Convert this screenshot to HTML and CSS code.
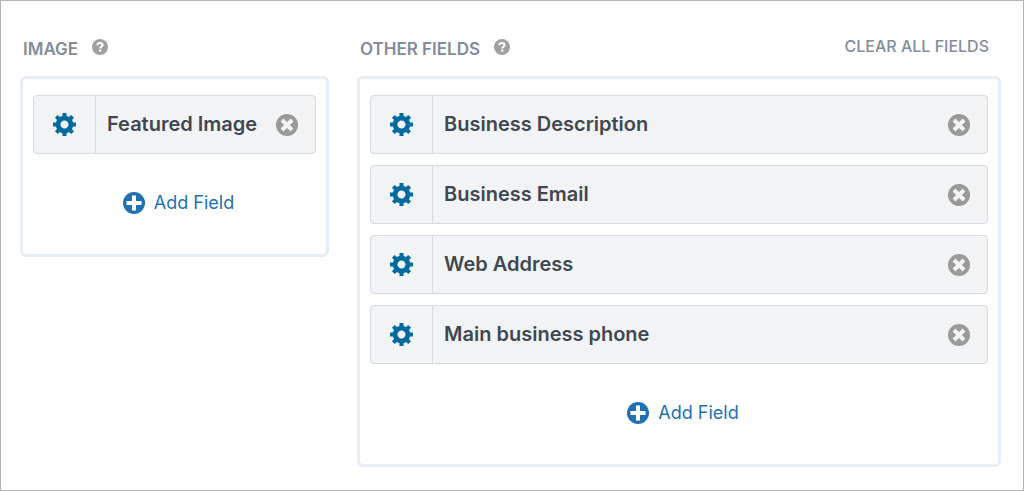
FILE: index.html
```html
<!DOCTYPE html>
<html lang="en">
<head>
<meta charset="utf-8">
<title>Fields</title>
<link rel="stylesheet" href="styles.css">
</head>
<body>
<svg hidden>
  <symbol id="gear" viewBox="1 2 17 17"><path d="M18 12h-2.18c-.17.7-.44 1.35-.81 1.93l1.54 1.54-2.1 2.1-1.54-1.54c-.58.36-1.23.63-1.91.79V19H8v-2.18c-.68-.16-1.33-.43-1.91-.79l-1.54 1.54-2.12-2.12 1.54-1.54c-.36-.58-.63-1.23-.79-1.91H1V9.03h2.17c.16-.7.44-1.35.8-1.94L2.43 5.55l2.1-2.1 1.54 1.54c.58-.37 1.24-.64 1.93-.81V2h3v2.18c.68.16 1.33.43 1.91.79l1.54-1.54 2.12 2.12-1.54 1.54c.36.59.64 1.24.8 1.94H18V12zm-8.5 1.5c1.66 0 3-1.34 3-3s-1.34-3-3-3-3 1.34-3 3 1.34 3 3 3z"/></symbol>
  <symbol id="remove" viewBox="0 0 22 22"><circle cx="11" cy="11" r="11"/><path d="M6 6l10 10M16 6L6 16" stroke="#f2f3f5" stroke-width="4"/></symbol>
  <symbol id="plus" viewBox="0 0 22 22"><circle cx="11" cy="11" r="11"/><path d="M11 3.5v15M3.5 11h15" stroke="#fff" stroke-width="4"/></symbol>
  <symbol id="help" viewBox="0 0 16 16"><circle cx="8" cy="8" r="8"/><path d="M5.4 6.3C5.4 4.7 6.5 3.9 8 3.9s2.6.8 2.6 2.1c0 1.6-2.3 1.6-2.3 3.4" fill="none" stroke="#fff" stroke-width="2"/><path d="M7.1 10.5h2.3v2.1H7.1z" fill="#fff"/></symbol>
</svg>
<main class="layout">
  <section class="group">
    <header class="group-header">
      <h2 class="group-title">IMAGE</h2>
      <button class="icon-button help" aria-label="Help: image"><svg class="help-icon"><use href="#help"/></svg></button>
    </header>
    <div class="panel">
      <ul class="fields">
        <li class="field">
          <button class="icon-button settings" aria-label="Settings"><svg class="gear-icon"><use href="#gear"/></svg></button>
          <span class="field-name">Featured Image</span>
          <button class="icon-button remove" aria-label="Remove"><svg class="round-icon"><use href="#remove"/></svg></button>
        </li>
      </ul>
      <button class="add-field"><svg class="round-icon"><use href="#plus"/></svg>Add Field</button>
    </div>
  </section>
  <section class="group">
    <header class="group-header">
      <h2 class="group-title">OTHER FIELDS</h2>
      <button class="icon-button help" aria-label="Help: other fields"><svg class="help-icon"><use href="#help"/></svg></button>
      <button class="clear-all">CLEAR ALL FIELDS</button>
    </header>
    <div class="panel">
      <ul class="fields">
        <li class="field">
          <button class="icon-button settings" aria-label="Settings"><svg class="gear-icon"><use href="#gear"/></svg></button>
          <span class="field-name">Business Description</span>
          <button class="icon-button remove" aria-label="Remove"><svg class="round-icon"><use href="#remove"/></svg></button>
        </li>
        <li class="field">
          <button class="icon-button settings" aria-label="Settings"><svg class="gear-icon"><use href="#gear"/></svg></button>
          <span class="field-name">Business Email</span>
          <button class="icon-button remove" aria-label="Remove"><svg class="round-icon"><use href="#remove"/></svg></button>
        </li>
        <li class="field">
          <button class="icon-button settings" aria-label="Settings"><svg class="gear-icon"><use href="#gear"/></svg></button>
          <span class="field-name">Web Address</span>
          <button class="icon-button remove" aria-label="Remove"><svg class="round-icon"><use href="#remove"/></svg></button>
        </li>
        <li class="field">
          <button class="icon-button settings" aria-label="Settings"><svg class="gear-icon"><use href="#gear"/></svg></button>
          <span class="field-name">Main business phone</span>
          <button class="icon-button remove" aria-label="Remove"><svg class="round-icon"><use href="#remove"/></svg></button>
        </li>
      </ul>
      <button class="add-field"><svg class="round-icon"><use href="#plus"/></svg>Add Field</button>
    </div>
  </section>
</main>
</body>
</html>
```

FILE: styles.css
```css
* {
  box-sizing: border-box;
}

body {
  margin: 0;
  min-height: 100vh;
  border: 1px solid #b5b5b5;
  background: #fff;
  font-family: Inter, "Liberation Sans", sans-serif;
}

button {
  padding: 0;
  border: 0;
  background: none;
  font: inherit;
  cursor: pointer;
}

svg {
  display: block;
  fill: currentColor;
}

svg[hidden] {
  display: none;
}

.layout {
  display: grid;
  grid-template-columns: 309fr 644fr;
  align-items: start;
  gap: 28px;
  padding: 32px 22px 20px 19px;
}

.group-header {
  display: flex;
  align-items: center;
  height: 32px;
  margin-bottom: 11px;
  padding: 0 12px 0 3px;
  color: #828d99;
}

.group-title {
  margin: 0;
  font-size: 17px;
  font-weight: 600;
  line-height: 32px;
}

.icon-button {
  display: flex;
  flex: none;
  align-items: center;
  justify-content: center;
}

.help {
  margin-left: 14px;
  padding-bottom: 5px;
  color: #a0a0a0;
}

.help-icon {
  width: 16px;
  height: 16px;
}

.clear-all {
  margin-left: auto;
  padding-bottom: 6px;
  color: #828d99;
  font-size: 16px;
  font-weight: 500;
}

.panel {
  padding: 16px 10px 39px;
  border: 3px solid #e8eef6;
  border-radius: 6px;
}

.fields {
  display: grid;
  gap: 11px;
  margin: 0;
  padding: 0;
  list-style: none;
}

.field {
  display: flex;
  min-height: 59px;
  border: 1px solid #d7dade;
  border-radius: 4px;
  background: #f2f3f5;
  color: #3f4850;
}

.settings {
  width: 62px;
  border-right: 1px solid #d7dade;
  color: #016b9f;
}

.gear-icon {
  width: 23px;
  height: 23px;
}

.field-name {
  flex: 1;
  padding-left: 11px;
  font-size: 20px;
  font-weight: 600;
  line-height: 56px;
}

.remove {
  padding-right: 17px;
  color: #999;
}

.round-icon {
  width: 22px;
  height: 22px;
}

.add-field {
  display: flex;
  align-items: center;
  gap: 9px;
  margin: 37px auto 0;
  padding-left: 8px;
  color: #2271b1;
  font-size: 18px;
  line-height: 24px;
}
```
